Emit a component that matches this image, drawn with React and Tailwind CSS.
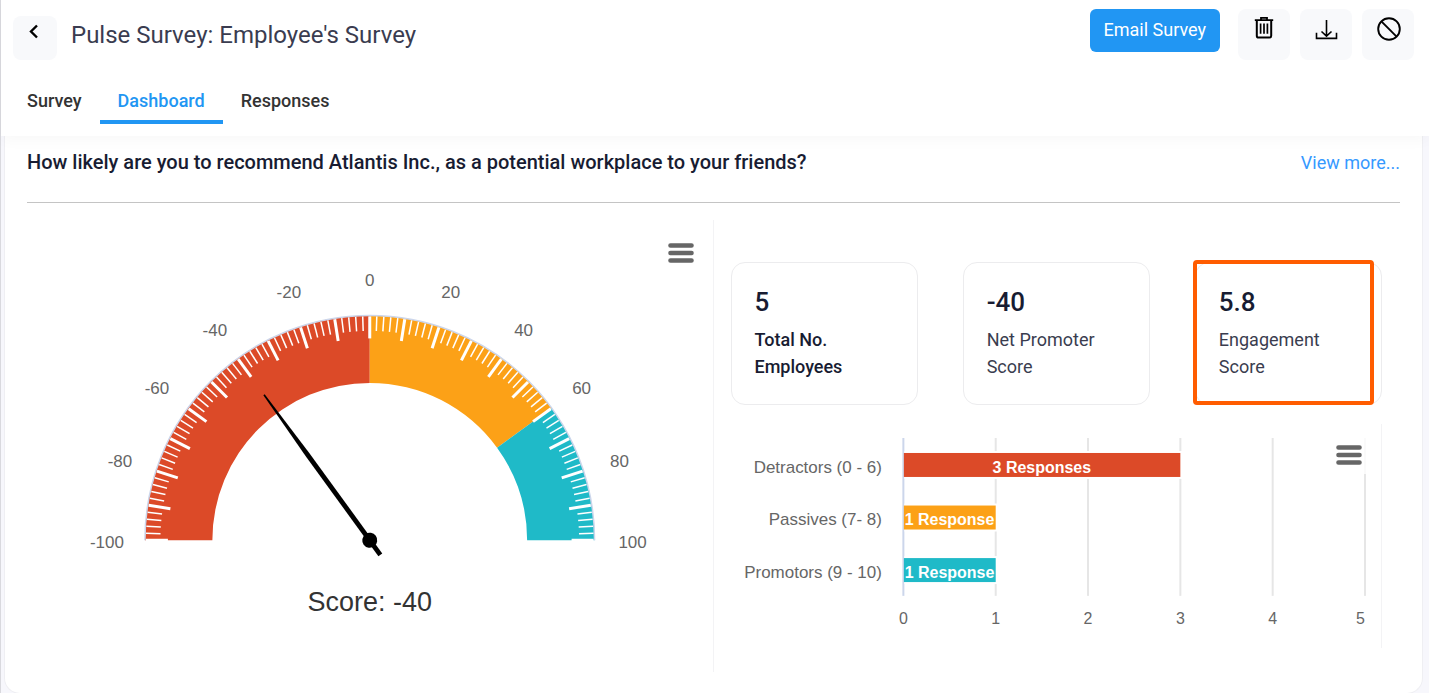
import { useState } from "react";
import { clsx } from "clsx";

const TABS = ["Survey", "Dashboard", "Responses"];

const STATS = [
  { value: "5", label: ["Total No.", "Employees"], strong: true },
  { value: "-40", label: ["Net Promoter", "Score"] },
  { value: "5.8", label: ["Engagement", "Score"], highlighted: true },
];

const BARS = [
  { name: "Detractors (0 - 6)", count: 3, text: "3 Responses", color: "#dc4a28" },
  { name: "Passives (7- 8)", count: 1, text: "1 Response", color: "#fca117" },
  { name: "Promotors (9 - 10)", count: 1, text: "1 Response", color: "#1fbac8" },
];

// gauge geometry, -100 on the left and 100 on the right
const CX = 343;
const CY = 320.5;
const OUTER = 225;
const INNER = 157.5;

const BANDS = [
  { from: -100, to: 0, color: "#dc4a28" },
  { from: 0, to: 60, color: "#fca117" },
  { from: 60, to: 100, color: "#1fbac8" },
];

const LABELS = [
  { text: "-100", x: 80, y: 328 },
  { text: "-80", x: 93, y: 247 },
  { text: "-60", x: 130, y: 174 },
  { text: "-40", x: 188, y: 116 },
  { text: "-20", x: 262, y: 78 },
  { text: "0", x: 343, y: 66 },
  { text: "20", x: 424, y: 78 },
  { text: "40", x: 497, y: 116 },
  { text: "60", x: 555, y: 174 },
  { text: "80", x: 593, y: 247 },
  { text: "100", x: 606, y: 328 },
];

const point = (value, radius) => {
  const angle = Math.PI * (1 - (value + 100) / 200);
  return [CX + radius * Math.cos(angle), CY - radius * Math.sin(angle)];
};

const bandPath = (from, to) => {
  const a = point(from, OUTER);
  const b = point(to, OUTER);
  const c = point(to, INNER);
  const d = point(from, INNER);
  return `M${a} A${OUTER} ${OUTER} 0 0 1 ${b} L${c} A${INNER} ${INNER} 0 0 0 ${d} Z`;
};

function MenuButton({ label, className }) {
  return (
    <button type="button" aria-label={label} className={clsx("absolute bg-white/80 p-2", className)}>
      <svg width="26" height="22" viewBox="0 0 26 22" stroke="#666" strokeWidth="4.6" strokeLinecap="round">
        <path d="M2.5 3.5H23.5M2.5 11H23.5M2.5 18.5H23.5" />
      </svg>
    </button>
  );
}

function IconButton({ label, children }) {
  return (
    <button type="button" aria-label={label} className="flex h-[51px] w-[52px] justify-center rounded-lg bg-[#f8f9fb] pt-[7px] text-black">
      {children}
    </button>
  );
}

function Gauge({ score }) {
  const ticks = Array.from({ length: 101 }, (_, i) => -100 + i * 2);
  const rotation = ((score + 100) / 200) * 180 - 90;

  return (
    <svg viewBox="0 0 686 452" className="block w-full font-['Liberation_Sans',sans-serif]">
      {BANDS.map((band) => (
        <path key={band.from} d={bandPath(band.from, band.to)} fill={band.color} />
      ))}
      <path d={`M${point(-100, OUTER)} A${OUTER} ${OUTER} 0 0 1 ${point(100, OUTER)}`} fill="none" stroke="#ccd6eb" strokeWidth="1.5" />
      {ticks.map((t) => {
        const major = t % 10 === 0;
        const [x1, y1] = point(t, OUTER - 1);
        const [x2, y2] = point(t, OUTER - (major ? 23 : 15.5));
        return <line key={t} x1={x1} y1={y1} x2={x2} y2={y2} stroke="#fff" strokeWidth={major ? 3 : 1.5} />;
      })}
      {LABELS.map((l) => (
        <text key={l.text} x={l.x} y={l.y} fontSize="17" fill="#666" textAnchor="middle">{l.text}</text>
      ))}
      {/* needle */}
      <g transform={`translate(${CX} ${CY}) rotate(${rotation})`}>
        <path d="M-2.4 18 L-2.4 -106 L-0.8 -180 L0.8 -180 L2.4 -106 L2.4 18 Z" />
        <circle r="7.5" />
      </g>
      <text x="343" y="391" fontSize="27" fill="#333" textAnchor="middle">Score: {score}</text>
    </svg>
  );
}

function BarChart() {
  const x0 = 172.5;
  const step = 92.4;

  return (
    <svg viewBox="0 0 651 224" className="block w-full font-['Liberation_Sans',sans-serif]">
      {[0, 1, 2, 3, 4, 5].map((n) => (
        <g key={n}>
          <line x1={x0 + n * step} x2={x0 + n * step} y1="14" y2="172" stroke={n ? "#e6e6e6" : "#ccd6eb"} strokeWidth="2" />
          <text x={n === 5 ? 630 : x0 + n * step} y="200" fontSize="16" fill="#666" textAnchor="middle">{n}</text>
        </g>
      ))}
      {BARS.map((bar, i) => {
        const y = 29 + i * 52.6;
        const width = bar.count * step;
        return (
          <g key={bar.name}>
            <rect x={x0 + 1} y={y - 2} width={width + 1} height="28" fill="#fff" />
            <rect x={x0 + 0.5} y={y} width={width - 0.5} height="24" fill={bar.color} />
            <text x="151" y={y + 20} fontSize="17" fill="#666" textAnchor="end">{bar.name}</text>
            <text x={x0 + width / 2} y={y + 20} fontSize="16" fontWeight="bold" fill="#fff" textAnchor="middle">{bar.text}</text>
          </g>
        );
      })}
    </svg>
  );
}

function StatCard({ value, label, strong, highlighted }) {
  return (
    <div className="relative rounded-[14px] border border-[#ececee] px-[23px] pt-[23px] pb-6">
      <p className="text-[26px] leading-8 font-medium text-[#181c32]">{value}</p>
      <p className={clsx("mt-2 text-lg leading-[27px]", strong ? "font-medium text-[#181c32]" : "text-[#3a3d4f]")}>
        {label[0]}<br />{label[1]}
      </p>
      {highlighted && <div className="pointer-events-none absolute -top-[3px] right-[7px] -bottom-px -left-[3px] rounded-sm border-4 border-[#ff5c00]" />}
    </div>
  );
}

export default function App() {
  const [tab, setTab] = useState("Dashboard");

  return (
    <div className="min-h-screen border-l border-[#d9d9de] bg-[#f7f7fc] font-[Roboto,sans-serif]">
      {/* HEADER */}
      <header className="sticky top-0 z-10 bg-white pb-3 shadow-[0_4px_14px_rgba(0,0,0,0.03)]">
        <div className="flex items-start justify-between pt-[9px] pr-[15px] pl-3">
          <div className="flex items-start gap-[14px] pt-[7px]">
            <button type="button" aria-label="Back" className="flex h-11 w-11 justify-center rounded-lg bg-[#f8f9fb] pt-2">
              <svg width="16" height="16" viewBox="0 0 16 16" fill="none" stroke="#000" strokeWidth="2.4">
                <path d="M10 1.5L4 7.5L10 13.5" />
              </svg>
            </button>
            <h1 className="pt-[5px] text-2xl leading-7 text-[#3a3c50]">Pulse Survey: Employee's Survey</h1>
          </div>
          <div className="flex items-start gap-[10px]">
            <button type="button" className="mr-2 h-[43px] rounded-md bg-[#2196f3] px-[14px] pb-[2px] text-lg text-white">Email Survey</button>
            <IconButton label="Delete">
              <svg width="24" height="24" viewBox="0 0 24 24" fill="none" stroke="currentColor" strokeWidth="1.8">
                <path d="M2.8 4.2H21.2M9 3.6V1.8H15V3.6" />
                <path d="M4.8 4.5V19.7Q4.8 21.6 6.7 21.6H17.3Q19.2 21.6 19.2 19.7V4.5" strokeWidth="2" />
                <path d="M8.6 7.5V17.8M12 7.5V17.8M15.4 7.5V17.8" strokeWidth="1.7" />
              </svg>
            </IconButton>
            <IconButton label="Download">
              <svg width="24" height="26" viewBox="0 0 24 26" fill="none" stroke="currentColor" strokeWidth="1.6">
                <path d="M12.5 4V20M7.5 15.5L12.5 20.2L17.5 15.5" />
                <path d="M2.5 16.8V22.4H22.5V16.8" />
              </svg>
            </IconButton>
            <IconButton label="Disable">
              <svg width="26" height="26" viewBox="0 0 26 26" fill="none" stroke="currentColor" strokeWidth="1.9">
                <circle cx="14" cy="13" r="10.8" />
                <path d="M6.4 5.4L21.6 20.6" />
              </svg>
            </IconButton>
          </div>
        </div>
        <nav className="mt-[18px] flex pl-2">
          {TABS.map((name) => (
            <button
              key={name}
              type="button"
              onClick={() => setTab(name)}
              className={clsx(
                "border-b-4 px-[18px] pt-[9px] pb-[6px] text-lg leading-[27px] font-medium",
                tab === name ? "border-[#2196f3] text-[#2196f3]" : "border-transparent text-[#333]"
              )}
            >
              {name}
            </button>
          ))}
        </nav>
      </header>

      <main className="mr-[6px] ml-[3px] rounded-b-2xl border border-t-0 border-[#efeff3] bg-white px-[22px] pb-[21px]">
        <div className="flex items-end justify-between border-b border-[#c4c4c4] pt-3 pb-[25px]">
          <h2 className="pb-px text-xl leading-7 font-medium text-[#181c32]">
            How likely are you to recommend Atlantis Inc., as a potential workplace to your friends?
          </h2>
          <a href="#more" className="text-lg leading-7 text-[#3699ff]">View more...</a>
        </div>

        <div className="mt-[17px] grid grid-cols-2">
          <section className="relative border-r border-[#f3f3f5]">
            <Gauge score={-40} />
            <MenuButton label="Gauge chart menu" className="top-[14px] right-[11px]" />
          </section>

          <section className="pt-[42px] pr-[18px] pl-[17px]">
            <div className="grid grid-cols-3 gap-[45px]">
              {STATS.map((stat) => (
                <StatCard key={stat.value} {...stat} />
              ))}
            </div>
            <div className="relative mt-[19px] border-r border-[#f3f3f5]">
              <BarChart />
              <MenuButton label="Bar chart menu" className="top-[12px] right-[11px]" />
            </div>
          </section>
        </div>
      </main>
    </div>
  );
}
